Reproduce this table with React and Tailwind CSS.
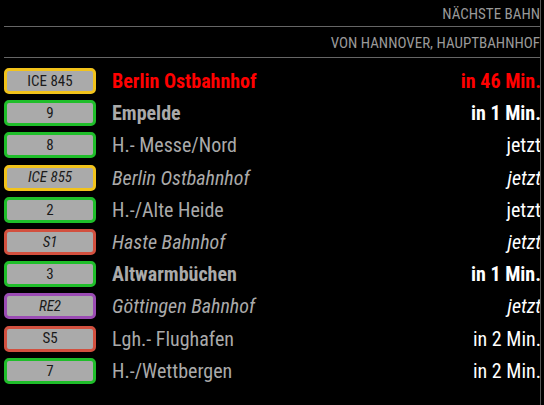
const rows = [
  { line: "ICE 845", border: "border-[#f2c31b]", dest: "Berlin Ostbahnhof", time: "in 46 Min.", style: "red" },
  { line: "9", border: "border-[#1fbe2a]", dest: "Empelde", time: "in 1 Min.", style: "bold" },
  { line: "8", border: "border-[#1fbe2a]", dest: "H.- Messe/Nord", time: "jetzt", style: "normal" },
  { line: "ICE 855", border: "border-[#f2c31b]", dest: "Berlin Ostbahnhof", time: "jetzt", style: "italic" },
  { line: "2", border: "border-[#1fbe2a]", dest: "H.-/Alte Heide", time: "jetzt", style: "normal" },
  { line: "S1", border: "border-[#d2503f]", dest: "Haste Bahnhof", time: "jetzt", style: "italic" },
  { line: "3", border: "border-[#1fbe2a]", dest: "Altwarmbüchen", time: "in 1 Min.", style: "bold" },
  { line: "RE2", border: "border-[#9b4cb4]", dest: "Göttingen Bahnhof", time: "jetzt", style: "italic" },
  { line: "S5", border: "border-[#d2503f]", dest: "Lgh.- Flughafen", time: "in 2 Min.", style: "normal" },
  { line: "7", border: "border-[#1fbe2a]", dest: "H.-/Wettbergen", time: "in 2 Min.", style: "normal" },
];

function Row({ row }) {
  const italic = row.style === "italic";
  const destClass =
    row.style === "red"
      ? "font-bold text-[#ff0000]"
      : row.style === "bold"
      ? "font-bold text-[#aaaaaa]"
      : italic
      ? "italic text-[#aaaaaa]"
      : "text-[#aaaaaa]";
  const timeClass =
    row.style === "red"
      ? "font-bold text-[#ff0000]"
      : row.style === "bold"
      ? "font-bold text-white"
      : italic
      ? "italic text-white"
      : "text-white";
  return (
    <div className="flex items-center h-[32.2px]">
      <div
        className={`w-[92px] h-[26px] shrink-0 flex items-center justify-center rounded-[5px] border-[3px] bg-[#aaaaaa] text-[#1a1a1a] text-[15px] ${row.border} ${italic ? "italic" : ""}`}
      >
        {row.line}
      </div>
      <div className={`ml-4 flex-1 text-[20px] whitespace-nowrap ${destClass}`}>{row.dest}</div>
      <div className={`mr-[-1px] text-[20px] whitespace-nowrap ${timeClass}`}>{row.time}</div>
    </div>
  );
}

export default function App() {
  return (
    <div className="w-[544px] h-[405px] bg-black flex font-['Roboto_Condensed',sans-serif]">
      <div className="ml-1 w-[536px] overflow-hidden">
        <div className="h-[26px] flex items-center justify-end text-[15px] text-[#999999] leading-none pt-[3px]">
          NÄCHSTE BAHN
        </div>
        <div className="h-px bg-[#666666]" />
        <div className="h-[30px] flex items-center justify-end text-[15px] text-[#999999] leading-none pt-[3px]">
          VON HANNOVER, HAUPTBAHNHOF
        </div>
        <div className="h-px bg-[#666666]" />
        <div className="pt-[7px]">
          {rows.map((r, i) => (
            <Row key={i} row={r} />
          ))}
        </div>
      </div>
      <div className="w-px bg-[#555555]" />
    </div>
  );
}
